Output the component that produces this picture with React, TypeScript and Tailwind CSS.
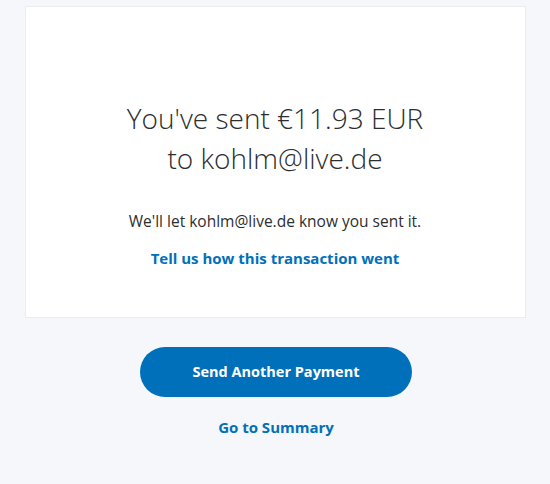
export default function App() {
  return (
    <div className="min-h-[484px] w-full bg-[#f5f7fa] pt-[6px] font-['Open_Sans',sans-serif] text-[#2c2e2f]">
      <div className="mx-auto flex h-[312px] w-[501px] flex-col items-center border border-[#eaeced] bg-white pt-[91px]">
        <h1 className="text-center text-[28px] font-light leading-[40px] text-[#2c2e2f]">
          You've sent €11.93 EUR
          <br />
          to kohlm@live.de
        </h1>
        <p className="mt-[32px] text-[15.5px] leading-[22px] text-[#2c2e2f]">
          We'll let kohlm@live.de know you sent it.
        </p>
        <a href="#" className="mt-[15px] text-[15px] font-bold leading-[22px] text-[#0070ba]">
          Tell us how this transaction went
        </a>
      </div>
      <div className="flex flex-col items-center pl-[2px]">
        <button className="mt-[29px] h-[50px] w-[272px] rounded-full bg-[#0070ba] text-[14.5px] font-bold text-white">
          Send Another Payment
        </button>
        <a href="#" className="mt-[19px] text-[15px] font-bold leading-[22px] text-[#0070ba]">
          Go to Summary
        </a>
      </div>
    </div>
  );
}
